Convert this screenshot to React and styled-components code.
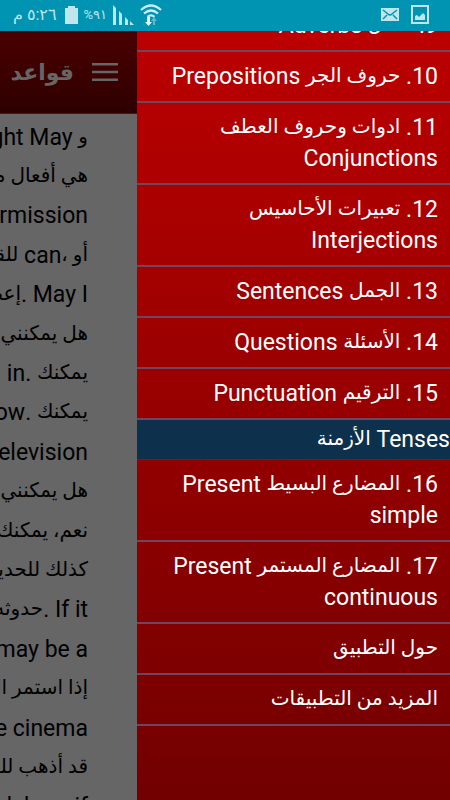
import React from "react";
import styled, { createGlobalStyle } from "styled-components";

const menu = [
  "9. الحال Adverbs",
  "10. حروف الجر Prepositions",
  "11. ادوات وحروف العطف Conjunctions",
  "12. تعبيرات الأحاسيس Interjections",
  "13. الجمل Sentences",
  "14. الأسئلة Questions",
  "15. الترقيم Punctuation",
];

const tenses = [
  "16. المضارع البسيط Present simple",
  "17. المضارع المستمر Present continuous",
  "حول التطبيق",
  "المزيد من التطبيقات",
];

const paragraphs = [
  ["و Might May", "هي أفعال مساعدة", "permission"],
  ["أو ،can للقدرة", "May I .إعطاء"],
  ["هل يمكنني", "يمكنك .in", "يمكنك .window"],
  ["television", "هل يمكنني"],
  ["نعم، يمكنك", "كذلك للحديث", "If it .حدوثه"],
  ["it may be a", "إذا استمر المطر"],
  ["the cinema", "قد أذهب للسينما", "park here if"],
];

// Arabic runs are set smaller than the Latin text beside them
function MixedText({ children }) {
  return children
    .split(/([\u0600-\u06ff]+(?: [\u0600-\u06ff]+)*)/)
    .map((part, i) => (i % 2 ? <Arabic key={i}>{part}</Arabic> : part));
}

function StatusBar() {
  return (
    <StatusBarStyled>
      <div className='group'>
        <span className='clock'>٥:٢٦ م</span>
        <svg width='13' height='18' viewBox='0 0 13 18'>
          <path d='M0 2h3V0h7v2h3v16H0z' fill='#bfe5ed' />
        </svg>
        <span className='battery'>%٩١</span>
        <svg width='21' height='20' viewBox='0 0 21 20'>
          <path
            d='M0 0l3 3v17H0zM6 6l3 3v11H6zM12 12l3 3v5h-3zM17 16l4 4h-4z'
            fill='#bfe5ed'
          />
        </svg>
        <svg width='22' height='22' viewBox='0 0 22 22'>
          <path
            d='M1 6Q11-3 21 6M4 9.5Q11 3.5 18 9.5M7.5 12.8Q11 10 14.5 12.8'
            fill='none'
            stroke='#cdebf1'
            strokeWidth='2.2'
          />
          <path d='M7 13h3v5h2l-3.5 4L5 18h2z' fill='#e6f6f9' />
          <path d='M13 21v-4h-2l3-4 3 4h-2v4z' fill='#5fb9cc' />
        </svg>
      </div>
      <div className='group'>
        <svg width='18' height='13' viewBox='0 0 18 13'>
          <path d='M0 0h18v13H0z' fill='#bfe5ed' />
          <path
            d='M2 2l5 4q2 2 4 0l5-4M2 11l4-4M16 11l-4-4'
            fill='none'
            stroke='#0094b2'
            strokeWidth='1.5'
          />
        </svg>
        <svg width='18' height='19' viewBox='0 0 18 19'>
          <path d='M1 1h16v17H1z' fill='none' stroke='#bfe5ed' strokeWidth='2' />
          <path d='M4 15v-4l2-1 2 2 4-4 2 2v5z' fill='#bfe5ed' />
        </svg>
      </div>
    </StatusBarStyled>
  );
}

function MenuItem({ label }) {
  return (
    <MenuRow>
      <a href='#menu'>
        <MixedText>{label}</MixedText>
      </a>
    </MenuRow>
  );
}

function App() {
  const drawerRef = React.useRef(null);

  React.useLayoutEffect(() => {
    drawerRef.current.scrollTop = 30;
  }, []);

  return (
    <AppStyled dir='rtl'>
      <GlobalStyle />
      <StatusBar />
      <Screen>
        <Drawer ref={drawerRef}>
          <ul>
            {menu.map((label) => (
              <MenuItem key={label} label={label} />
            ))}
            <MenuHeader>
              <MixedText>Tenses الأزمنة</MixedText>
            </MenuHeader>
            {tenses.map((label) => (
              <MenuItem key={label} label={label} />
            ))}
          </ul>
        </Drawer>
        <Page>
          <header>
            <button aria-label='القائمة'>
              <svg width='26' height='18' viewBox='0 0 26 18'>
                <path
                  d='M0 1.3h26M0 9h26M0 16.7h26'
                  stroke='#666'
                  strokeWidth='2.6'
                />
              </svg>
            </button>
            <h1>قواعد</h1>
          </header>
          <main>
            {paragraphs.map((lines, i) => (
              <Paragraph key={i}>
                {lines.map((line) => (
                  <Line key={line}>
                    <MixedText>{line}</MixedText>
                  </Line>
                ))}
              </Paragraph>
            ))}
          </main>
        </Page>
      </Screen>
    </AppStyled>
  );
}

const GlobalStyle = createGlobalStyle`
  * {
    box-sizing: border-box;
  }

  body {
    margin: 0;
    font-family: Roboto, "DejaVu Sans", sans-serif;
  }
`;

const AppStyled = styled.div`
  height: 100vh;
  display: flex;
  flex-direction: column;
  overflow: hidden;
`;

const StatusBarStyled = styled.div`
  direction: ltr;
  height: 31px;
  flex: none;
  padding: 0 21px 2px 13px;
  display: flex;
  justify-content: space-between;
  align-items: center;
  background: #0094b2;
  color: #bfe5ed;

  .group {
    display: flex;
    align-items: center;
    gap: 6px;
  }

  .group:last-child {
    gap: 12px;
  }

  .clock {
    direction: rtl;
    margin-right: 2px;
    font-size: 16px;
  }

  .battery {
    font-size: 13px;
  }
`;

const Screen = styled.div`
  flex: 1;
  min-height: 0;
  display: flex;
`;

const Drawer = styled.nav`
  flex: 1;
  min-width: 0;
  overflow-y: auto;
  scrollbar-width: none;
  background: linear-gradient(#bb0000, #720000);
  color: #fff;

  ul {
    list-style: none;
    margin: 0;
    padding: 0 0 80px;
  }
`;

const MenuRow = styled.li`
  padding: 9px 12px 9px 24px;
  border-bottom: 2px solid #70455f;
  font-size: 23px;
  line-height: 31px;

  a {
    color: inherit;
    text-decoration: none;
  }
`;

const MenuHeader = styled.li`
  padding: 4px 0;
  border-bottom: 1px solid #57243a;
  background: #0d314c;
  font-size: 23px;
  line-height: 31px;
`;

const Arabic = styled.span`
  font-size: 20px;
  line-height: 1;
  vertical-align: 2px;
`;

const Page = styled.div`
  width: 137px;
  flex: none;
  overflow: hidden;
  background: #666;
  color: #000;

  header {
    height: 83px;
    padding: 0 19px 0 0;
    display: flex;
    align-items: center;
    gap: 18px;
    border-bottom: 1px solid #3a1a1a;
    background: linear-gradient(#4b0000, #2e0000);
  }

  button {
    display: flex;
    padding: 0;
    border: 0;
    background: none;
  }

  h1 {
    margin: 0;
    font-size: 22px;
    color: #666;
  }

  main {
    padding: 4px 49px 0 0;
  }
`;

const Paragraph = styled.p`
  margin: 0 0 1px;
`;

const Line = styled.span`
  display: block;
  font-size: 23px;
  line-height: 39px;
  white-space: nowrap;
`;

export default App;
